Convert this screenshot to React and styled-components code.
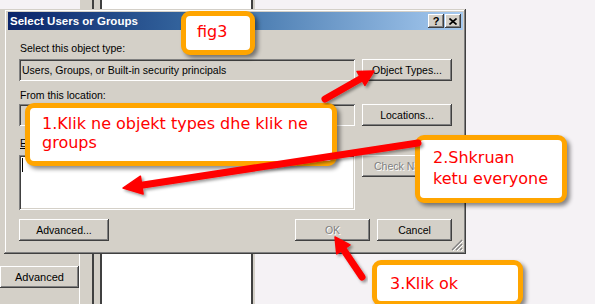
import React from 'react';
import styled, { createGlobalStyle } from 'styled-components';

const GlobalStyle = createGlobalStyle`
  html, body {
    margin: 0;
    padding: 0;
    overflow: hidden;
  }
  body {
    font-family: "Liberation Sans", Arial, sans-serif;
  }
`;

const GRAY = '#d4d0c8';
const RED = '#ff0000';
const ORANGE = '#ffa500';
const UI_SIZE = '10.5px';

const raised = `
  box-shadow: inset -1px -1px #404040, inset 1px 1px #ffffff,
    inset -2px -2px #808080, inset 2px 2px ${GRAY};
`;

const sunken = `
  box-shadow: inset 1px 1px #808080, inset -1px -1px #ffffff,
    inset 2px 2px #404040, inset -2px -2px ${GRAY};
`;

const Desktop = styled.div`
  position: relative;
  width: 595px;
  height: 304px;
  background: #f5f2f5;
  display: flex;
  overflow: hidden;
`;

/* window behind the dialog */
const LeftPane = styled.div`
  width: 80px;
  margin-top: 9px;
  background: ${GRAY};
  border-right: 1px solid #ffffff;
  display: flex;
  flex-direction: column;
  justify-content: flex-end;
  padding-bottom: 16px;
  box-sizing: border-box;
`;

const Gutter = styled.div`
  width: ${({ $w }) => $w}px;
  background: ${GRAY};
  border-right: 2px solid #404040;
`;

const WhitePane = styled.div`
  width: 149px;
  background: #ffffff;
  border-right: 2px solid #404040;
  box-shadow: 2px 0 0 ${GRAY};
`;

const Button = styled.div`
  grid-column: ${({ $col }) => $col || 'auto'};
  height: 22px;
  width: ${({ $w }) => ($w ? `${$w}px` : 'auto')};
  box-sizing: border-box;
  background: ${GRAY};
  ${raised}
  display: flex;
  align-items: center;
  justify-content: center;
  font-size: ${UI_SIZE};
  color: ${({ $disabled }) => ($disabled ? '#808080' : '#000000')};
  text-shadow: ${({ $disabled }) => ($disabled ? '1px 1px 0 #ffffff' : 'none')};
  align-self: start;
`;

const PaneButton = styled(Button)`
  align-self: stretch;
  font-size: 11px;
`;

/* the dialog */
const Dialog = styled.div`
  position: absolute;
  left: 4px;
  top: 9px;
  width: 462px;
  height: 245px;
  box-sizing: border-box;
  padding: 3px 3px 3px 4px;
  background: ${GRAY};
  box-shadow: inset -1px -1px #404040, inset 1px 1px ${GRAY},
    inset -2px -2px #808080, inset 2px 2px #ffffff;
  display: flex;
  flex-direction: column;
`;

const TitleBar = styled.div`
  height: 18px;
  display: flex;
  align-items: center;
  justify-content: space-between;
  padding: 0 2px 0 2px;
  background: linear-gradient(90deg, #0a246a 0%, #3a6ea5 45%, #a6caf0 100%);
`;

const TitleText = styled.span`
  color: #ffffff;
  font-weight: bold;
  font-size: 11.5px;
`;

const TitleButtons = styled.div`
  display: flex;
  gap: 1px;
`;

const TitleButton = styled.div`
  width: 16px;
  height: 14px;
  box-sizing: border-box;
  background: ${GRAY};
  ${raised}
  display: flex;
  align-items: center;
  justify-content: center;
  font-size: 11px;
  font-weight: bold;
  color: #000;
  line-height: 1;
`;

const Body = styled.div`
  position: relative;
  flex: 1;
  display: grid;
  grid-template-columns: 336px 90px;
  column-gap: 7px;
  align-content: start;
  padding: 12px 11px 0 11px;
`;

const Label = styled.div`
  grid-column: 1 / span 2;
  font-size: ${UI_SIZE};
  line-height: 13px;
  padding-left: 1px;
  margin-top: ${({ $mt }) => $mt || 0}px;
  margin-bottom: ${({ $mb }) => $mb || 0}px;
  color: #000;
`;

const Field = styled.div`
  grid-column: 1;
  height: ${({ $h }) => $h || 22}px;
  box-sizing: border-box;
  background: ${({ $white }) => ($white ? '#ffffff' : GRAY)};
  ${sunken}
  font-size: ${UI_SIZE};
  padding: 4px 3px;
  display: flex;
  align-items: ${({ $white }) => ($white ? 'flex-start' : 'center')};
`;

const Caret = styled.span`
  width: 1px;
  height: 14px;
  background: #000;
  margin-top: -1px;
`;

const Footer = styled.div`
  grid-column: 1 / span 2;
  margin-top: 9px;
  display: flex;
  justify-content: space-between;
`;

const ButtonGroup = styled.div`
  display: flex;
  gap: 7px;
`;

const Grip = styled.svg`
  position: absolute;
  right: 0;
  bottom: 0;
`;

/* annotations */
const Callout = styled.div`
  position: absolute;
  left: ${({ $x }) => $x}px;
  top: ${({ $y }) => $y}px;
  width: ${({ $w }) => $w}px;
  height: ${({ $h }) => $h}px;
  box-sizing: border-box;
  border: 5px solid ${ORANGE};
  border-radius: 9px;
  background: #ffffff;
  box-shadow: 3px 3px 4px rgba(0, 0, 0, 0.45);
  padding: ${({ $pad }) => $pad};
  font-family: "DejaVu Sans", Verdana, sans-serif;
  font-size: 16px;
  line-height: ${({ $lh }) => $lh || 19}px;
  color: ${RED};
`;

const Arrows = styled.svg`
  position: absolute;
  left: 0;
  top: 0;
  pointer-events: none;
`;

const arrows = [
  { tail: [325, 99], tip: [374, 71], head: 15, half: 8, w: 7 },
  { tail: [418, 143], tip: [123, 188], head: 19, half: 9, w: 7 },
  { tail: [362, 277], tip: [335, 237], head: 15, half: 8, w: 7 },
];

function Arrow({ tail, tip, head, half, w }) {
  const dx = tip[0] - tail[0];
  const dy = tip[1] - tail[1];
  const len = Math.hypot(dx, dy);
  const ux = dx / len;
  const uy = dy / len;
  const bx = tip[0] - ux * head;
  const by = tip[1] - uy * head;
  const nx = -uy;
  const ny = ux;
  const pts = `${tip[0]},${tip[1]} ${bx + nx * half},${by + ny * half} ${bx - nx * half},${by - ny * half}`;
  return (
    <g filter="url(#shadow)">
      <line x1={tail[0]} y1={tail[1]} x2={bx + ux * 2} y2={by + uy * 2} stroke={RED} strokeWidth={w} strokeLinecap="round" />
      <polygon points={pts} fill={RED} stroke={RED} strokeWidth="1.5" strokeLinejoin="round" />
    </g>
  );
}

export default function App() {
  return (
    <>
      <GlobalStyle />
      <Desktop>
        <LeftPane>
          <PaneButton>Advanced</PaneButton>
        </LeftPane>
        <Gutter $w={12} />
        <Gutter $w={6} />
        <WhitePane />

        <Dialog>
          <TitleBar>
            <TitleText>Select Users or Groups</TitleText>
            <TitleButtons>
              <TitleButton>?</TitleButton>
              <TitleButton>
                <svg width="8" height="7" viewBox="0 0 8 7">
                  <path d="M0.5 0.5 L7.5 6.5 M7.5 0.5 L0.5 6.5" stroke="#000" strokeWidth="1.6" />
                </svg>
              </TitleButton>
            </TitleButtons>
          </TitleBar>

          <Body>
            <Label $mb={4}>Select this object type:</Label>
            <Field>Users, Groups, or Built-in security principals</Field>
            <Button $col={2}>Object Types...</Button>

            <Label $mt={8} $mb={2}>From this location:</Label>
            <Field />
            <Button $col={2}>Locations...</Button>

            <Label $mt={11} $mb={5}>
              <u>E</u>nter the object names to select (examples):
            </Label>
            <Field $white $h={55}>
              <Caret />
            </Field>
            <Button $col={2} $disabled>Check Names</Button>

            <Footer>
              <Button $w={90}>Advanced...</Button>
              <ButtonGroup>
                <Button $w={75} $disabled>OK</Button>
                <Button $w={75}>Cancel</Button>
              </ButtonGroup>
            </Footer>

            <Grip width="12" height="12" viewBox="0 0 12 12">
              <path d="M11 1 L1 11 M11 5 L5 11 M11 9 L9 11" stroke="#808080" strokeWidth="1.2" />
              <path d="M12 2 L2 12 M12 6 L6 12 M12 10 L10 12" stroke="#ffffff" strokeWidth="1" />
            </Grip>
          </Body>
        </Dialog>

        <Callout $x={181} $y={11} $w={74} $h={44} $pad="6px 0 0 11px" $lh={20}>
          fig3
        </Callout>
        <Callout $x={25} $y={103} $w={312} $h={63} $pad="6px 0 0 12px">
          1.Klik ne objekt types dhe klik ne
          <br />
          groups
        </Callout>
        <Callout $x={415} $y={135} $w={152} $h={68} $pad="7px 0 0 13px" $lh={21}>
          2.Shkruan
          <br />
          ketu everyone
        </Callout>
        <Callout $x={372} $y={260} $w={151} $h={46} $pad="9px 0 0 13px">
          3.Klik ok
        </Callout>

        <Arrows width="595" height="304" viewBox="0 0 595 304">
          <defs>
            <filter id="shadow" x="-20%" y="-20%" width="140%" height="140%">
              <feDropShadow dx="2" dy="2" stdDeviation="1.5" floodColor="#000" floodOpacity="0.4" />
            </filter>
          </defs>
          {arrows.map((a, i) => (
            <Arrow key={i} {...a} />
          ))}
        </Arrows>
      </Desktop>
    </>
  );
}
